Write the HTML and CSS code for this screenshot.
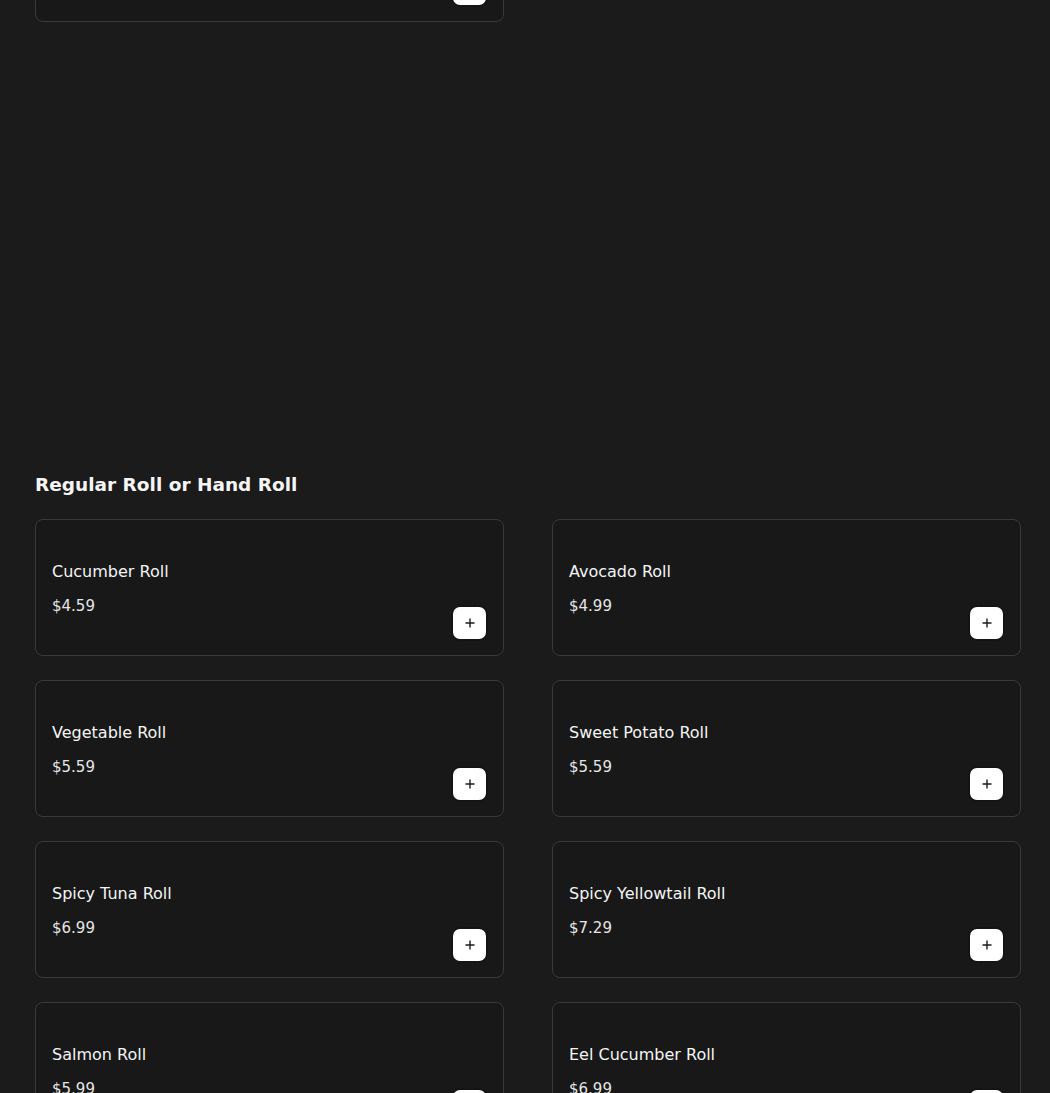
FILE: index.html
```html
<!DOCTYPE html>
<html lang="en">
<head>
<meta charset="utf-8">
<title>Menu</title>
<link rel="stylesheet" href="styles.css">
</head>
<body>
<main class="page">
  <section class="section section-prev">
    <div class="grid">
      <div class="card">
        <div class="info">
          <div class="name">&nbsp;</div>
          <div class="price">&nbsp;</div>
        </div>
        <button class="add" aria-label="Add"><svg viewBox="0 0 12 12" width="12" height="12"><path d="M6 1.5v9M1.5 6h9" stroke="#1b1b1b" stroke-width="1.4" fill="none"/></svg></button>
      </div>
    </div>
  </section>

  <section class="section">
    <h2 class="section-title">Regular Roll or Hand Roll</h2>
    <div class="grid">
      <div class="card">
        <div class="info"><div class="name">Cucumber Roll</div><div class="price">$4.59</div></div>
        <button class="add" aria-label="Add"><svg viewBox="0 0 12 12" width="12" height="12"><path d="M6 1.5v9M1.5 6h9" stroke="#1b1b1b" stroke-width="1.4" fill="none"/></svg></button>
      </div>
      <div class="card">
        <div class="info"><div class="name">Avocado Roll</div><div class="price">$4.99</div></div>
        <button class="add" aria-label="Add"><svg viewBox="0 0 12 12" width="12" height="12"><path d="M6 1.5v9M1.5 6h9" stroke="#1b1b1b" stroke-width="1.4" fill="none"/></svg></button>
      </div>
      <div class="card">
        <div class="info"><div class="name">Vegetable Roll</div><div class="price">$5.59</div></div>
        <button class="add" aria-label="Add"><svg viewBox="0 0 12 12" width="12" height="12"><path d="M6 1.5v9M1.5 6h9" stroke="#1b1b1b" stroke-width="1.4" fill="none"/></svg></button>
      </div>
      <div class="card">
        <div class="info"><div class="name">Sweet Potato Roll</div><div class="price">$5.59</div></div>
        <button class="add" aria-label="Add"><svg viewBox="0 0 12 12" width="12" height="12"><path d="M6 1.5v9M1.5 6h9" stroke="#1b1b1b" stroke-width="1.4" fill="none"/></svg></button>
      </div>
      <div class="card">
        <div class="info"><div class="name">Spicy Tuna Roll</div><div class="price">$6.99</div></div>
        <button class="add" aria-label="Add"><svg viewBox="0 0 12 12" width="12" height="12"><path d="M6 1.5v9M1.5 6h9" stroke="#1b1b1b" stroke-width="1.4" fill="none"/></svg></button>
      </div>
      <div class="card">
        <div class="info"><div class="name">Spicy Yellowtail Roll</div><div class="price">$7.29</div></div>
        <button class="add" aria-label="Add"><svg viewBox="0 0 12 12" width="12" height="12"><path d="M6 1.5v9M1.5 6h9" stroke="#1b1b1b" stroke-width="1.4" fill="none"/></svg></button>
      </div>
      <div class="card">
        <div class="info"><div class="name">Salmon Roll</div><div class="price">$5.99</div></div>
        <button class="add" aria-label="Add"><svg viewBox="0 0 12 12" width="12" height="12"><path d="M6 1.5v9M1.5 6h9" stroke="#1b1b1b" stroke-width="1.4" fill="none"/></svg></button>
      </div>
      <div class="card">
        <div class="info"><div class="name">Eel Cucumber Roll</div><div class="price">$6.99</div></div>
        <button class="add" aria-label="Add"><svg viewBox="0 0 12 12" width="12" height="12"><path d="M6 1.5v9M1.5 6h9" stroke="#1b1b1b" stroke-width="1.4" fill="none"/></svg></button>
      </div>
    </div>
  </section>
</main>
</body>
</html>
```

FILE: styles.css
```css
html, body {
  margin: 0;
  padding: 0;
  background: #1b1b1b;
  overflow: hidden;
}
body {
  font-family: "DejaVu Sans", "Open Sans", sans-serif;
  color: #f2f2f2;
}
.page {
  padding: 0 29px 0 35px;
}
.section-prev {
  margin-top: -115px;
  margin-bottom: 449px;
}
.section-title {
  margin: 0 0 20px;
  font-size: 18.5px;
  line-height: 28px;
  font-weight: 700;
  color: #f5f5f5;
}
.grid {
  display: grid;
  grid-template-columns: 469px 469px;
  column-gap: 48px;
  row-gap: 24px;
}
.card {
  box-sizing: border-box;
  height: 137px;
  border: 1px solid #3a3a3a;
  border-radius: 8px;
  background: #181818;
  padding: 16px;
  display: flex;
  justify-content: space-between;
  align-items: flex-end;
}
.info {
  align-self: flex-start;
  padding-top: 24px;
  display: flex;
  flex-direction: column;
  gap: 10px;
}
.name {
  font-size: 16px;
  line-height: 24px;
  font-weight: 500;
  color: #f4f4f4;
}
.price {
  font-size: 15px;
  line-height: 24px;
  color: #e6e6e6;
}
.add {
  width: 33px;
  height: 32px;
  margin-right: 1px;
  border: none;
  border-radius: 7px;
  background: #ffffff;
  padding: 0;
  display: flex;
  align-items: center;
  justify-content: center;
  box-shadow: 0 0 0 2px rgba(0,0,0,0.15);
}
.add svg {
  display: block;
}
```
